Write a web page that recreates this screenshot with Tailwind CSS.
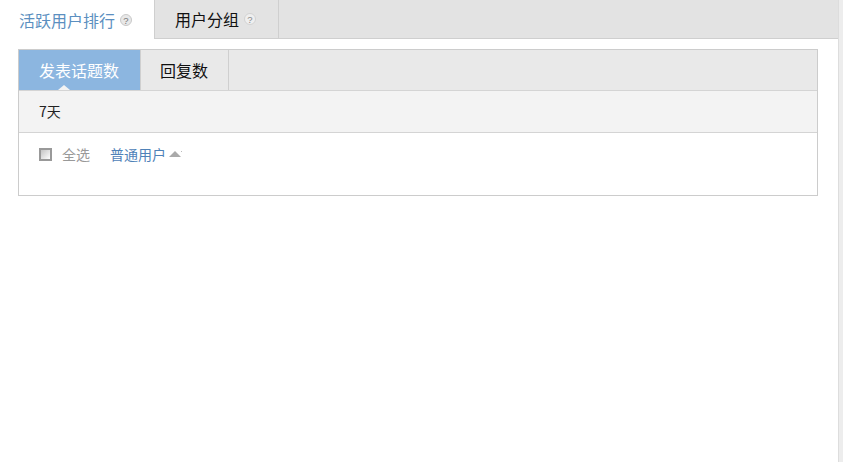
<!DOCTYPE html>
<html lang="zh-CN">

<head>
    <meta charset="UTF-8">
    <title>活跃用户排行</title>
    <script src="https://cdn.jsdelivr.net/npm/@tailwindcss/browser@4"></script>
</head>

<body class="bg-white font-['Noto_Sans_CJK_SC','Noto_Sans',sans-serif] overflow-hidden">
    <div class="flex h-[462px] w-[843px]">
        <div class="w-[838px] shrink-0">
            <!-- Top tabs -->
            <div class="flex h-[39px]">
                <div class="flex w-[155px] items-center border-r border-[#cfcfcf] pl-[19px] text-base text-[#5b8fc0]">
                    活跃用户排行
                    <svg class="ml-[5px]" width="12" height="12" viewBox="0 0 12 12"><circle cx="6" cy="6" r="5.5" fill="#e8e8e8" stroke="#c8c8c8"/><text x="6" y="9.5" text-anchor="middle" font-size="9.5" font-family="Liberation Sans" fill="#777">?</text></svg>
                </div>
                <div class="flex flex-1 border-b border-[#cfcfcf] bg-[#e3e3e3]">
                    <div class="flex w-[124px] items-center border-r border-[#cfcfcf] pl-5 text-base text-[#111]">
                        用户分组
                        <svg class="ml-[5px]" width="12" height="12" viewBox="0 0 12 12"><circle cx="6" cy="6" r="5.5" fill="#efefef" stroke="#d2d2d2"/><text x="6" y="9.5" text-anchor="middle" font-size="9.5" font-family="Liberation Sans" fill="#8a8a8a">?</text></svg>
                    </div>
                </div>
            </div>

            <!-- Panel -->
            <div class="mt-[10px] ml-[18px] h-[147px] w-[800px] border border-[#cccccc]">
                <div class="flex h-10 bg-[#e9e9e9]">
                    <div class="relative flex w-[121px] items-center bg-[#8cb6e0] pl-5 text-base text-white">
                        发表话题数
                        <span class="absolute bottom-0 left-[39px] h-0 w-0 border-x-[6px] border-b-[5px] border-x-transparent border-b-[#f3f3f3]"></span>
                    </div>
                    <div class="flex w-[89px] items-center border-x border-[#cfcfcf] pl-[19px] text-base text-[#111]">回复数</div>
                </div>
                <div class="flex h-[43px] items-center border-y border-[#d4d4d4] bg-[#f3f3f3] pb-px pl-5 text-sm text-[#222]">7天</div>
                <div class="flex items-center pt-[11px] pl-5 text-sm leading-5">
                    <span class="h-[13px] w-[13px] border-2 border-[#999] bg-gradient-to-br from-[#c4c4c4] to-white"></span>
                    <span class="ml-[10px] text-[#999]">全选</span>
                    <span class="ml-5 text-[#4f82b8]">普通用户</span>
                    <span class="ml-[3px] h-0 w-0 border-x-[6.5px] border-b-[6px] border-x-transparent border-b-[#aaaaaa]"></span>
                    <span class="mb-[6px] h-px w-px bg-[#bbbbbb]"></span>
                </div>
            </div>
        </div>
        <!-- Scrollbar edge -->
        <div class="flex-1 border-l border-[#dddddd] bg-[#ededed]"></div>
    </div>
</body>

</html>
